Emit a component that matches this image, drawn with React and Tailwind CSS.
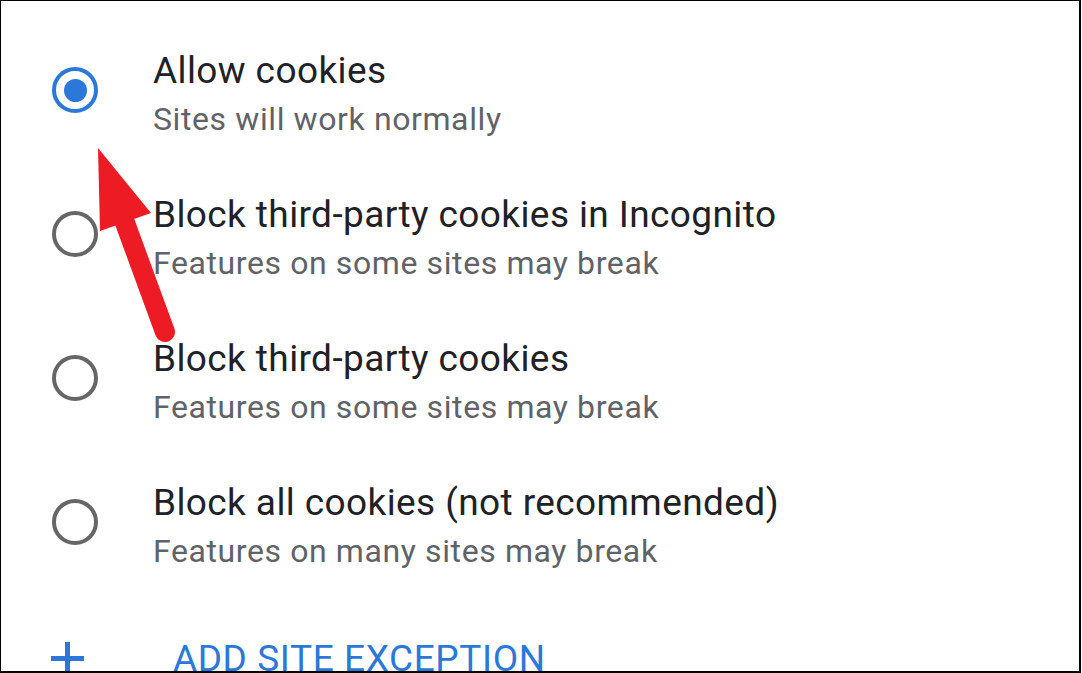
import { useState } from 'react';

const options = [
  { id: 'allow', title: 'Allow cookies', subtitle: 'Sites will work normally' },
  { id: 'incognito', title: 'Block third-party cookies in Incognito', subtitle: 'Features on some sites may break' },
  { id: 'third', title: 'Block third-party cookies', subtitle: 'Features on some sites may break' },
  { id: 'all', title: 'Block all cookies (not recommended)', subtitle: 'Features on many sites may break' },
];

function Radio({ checked }) {
  return (
    <div
      className={
        'mt-[18px] flex h-[46px] w-[46px] shrink-0 items-center justify-center rounded-full border-[4px] ' +
        (checked ? 'border-[#2b78d9]' : 'border-[#666666]')
      }
    >
      {checked && <div className="h-[23px] w-[23px] rounded-full bg-[#2b78d9]" />}
    </div>
  );
}

function Arrow() {
  return (
    <svg className="pointer-events-none absolute left-0 top-0" width="1082" height="673" viewBox="0 0 1082 673">
      <line x1="124" y1="220" x2="165" y2="332" stroke="#ed1c24" strokeWidth="20" strokeLinecap="round" />
      <polygon points="98,148 100,231 151,213" fill="#ed1c24" />
    </svg>
  );
}

export default function App() {
  const [selected, setSelected] = useState('allow');

  return (
    <div className="relative h-[673px] w-[1082px] overflow-hidden bg-white" style={{ fontFamily: 'Roboto, "Liberation Sans", sans-serif' }}>
      <div className="h-[673px] w-[1081px] overflow-hidden border-b-2 border-l border-r-2 border-t border-black pl-[51px] pt-[48px]">
        {options.map((opt) => (
          <div key={opt.id} className="flex h-[144px] cursor-pointer items-start" onClick={() => setSelected(opt.id)}>
            <Radio checked={selected === opt.id} />
            <div className="ml-[55px] flex flex-col">
              <div className="whitespace-nowrap text-[37px] leading-[44px] tracking-[0.4px] text-[#202124]">{opt.title}</div>
              <div className="mt-[6px] whitespace-nowrap text-[32px] leading-[40px] tracking-[0.6px] text-[#5f6368]">{opt.subtitle}</div>
            </div>
          </div>
        ))}

        <div className="mt-[12px] flex items-start">
          <div className="relative ml-[-1px] mt-[5px] h-[33px] w-[33px] shrink-0">
            <div className="absolute left-[14px] top-0 h-[33px] w-[5px] bg-[#2b78d9]" />
            <div className="absolute left-0 top-[14px] h-[5px] w-[33px] bg-[#2b78d9]" />
          </div>
          <div className="ml-[89px] whitespace-nowrap text-[37px] leading-[44px] tracking-[0.6px] text-[#2b78d9]">
            ADD SITE EXCEPTION
          </div>
        </div>
      </div>
      <Arrow />
    </div>
  );
}
